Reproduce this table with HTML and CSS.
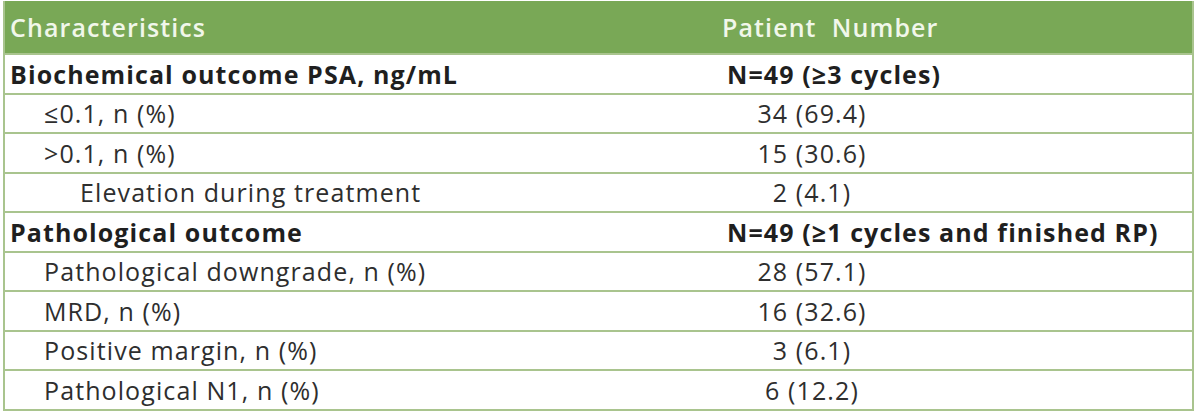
FILE: index.html
```html
<!DOCTYPE html>
<html>
<head>
<meta charset="utf-8">
<link rel="stylesheet" href="styles.css">
</head>
<body>
<div class="table">
  <div class="row head"><div class="c1">Characteristics</div><div class="c2 hd">Patient&nbsp; Number</div></div>
  <div class="row sec"><div class="c1">Biochemical outcome PSA, ng/mL</div><div class="c2 n">N=49 (≥3 cycles)</div></div>
  <div class="row"><div class="c1 i1">≤0.1, n (%)</div><div class="c2"><span class="val">34 (69.4)</span></div></div>
  <div class="row"><div class="c1 i1">&gt;0.1, n (%)</div><div class="c2"><span class="val">15 (30.6)</span></div></div>
  <div class="row"><div class="c1 i2">Elevation during treatment</div><div class="c2"><span class="val">2 (4.1)</span></div></div>
  <div class="row sec"><div class="c1">Pathological outcome</div><div class="c2 n">N=49 (≥1 cycles and finished RP)</div></div>
  <div class="row"><div class="c1 i1">Pathological downgrade, n (%)</div><div class="c2"><span class="val">28 (57.1)</span></div></div>
  <div class="row"><div class="c1 i1">MRD, n (%)</div><div class="c2"><span class="val">16 (32.6)</span></div></div>
  <div class="row"><div class="c1 i1">Positive margin, n (%)</div><div class="c2"><span class="val">3 (6.1)</span></div></div>
  <div class="row"><div class="c1 i1">Pathological N1, n (%)</div><div class="c2"><span class="val">6 (12.2)</span></div></div>
</div>
</body>
</html>
```
FILE: styles.css
```css
html, body {
  margin: 0;
  padding: 0;
  background: #ffffff;
}
body {
  padding: 1px 0 0 3px;
  font-family: "Open Sans", "Liberation Sans", sans-serif;
  font-size: 25px;
  letter-spacing: 1.1px;
  color: #2e2e2e;
}
.table {
  width: 1191px;
  box-sizing: border-box;
  border-left: 2px solid #a9c48e;
  border-right: 2px solid #a9c48e;
  border-bottom: 2px solid #a9c48e;
}
.row {
  display: grid;
  grid-template-columns: 712px 1fr;
  align-items: center;
  height: 39.5px;
  box-sizing: border-box;
  border-top: 2px solid #a9c48e;
  white-space: nowrap;
}
.row.head {
  height: 52px;
  border-top: none;
  background: #79a856;
  color: #f1f7ea;
  font-weight: 600;
}
.c1 {
  padding-left: 5px;
}
.c1.i1 { padding-left: 39px; }
.c1.i2 { padding-left: 75px; }
.c2.hd { padding-left: 5px; }
.c2.n { padding-left: 10px; }
.sec {
  font-weight: 700;
  color: #1f1f1f;
}
.val {
  display: inline-block;
  width: 190px;
  text-align: center;
}
```
